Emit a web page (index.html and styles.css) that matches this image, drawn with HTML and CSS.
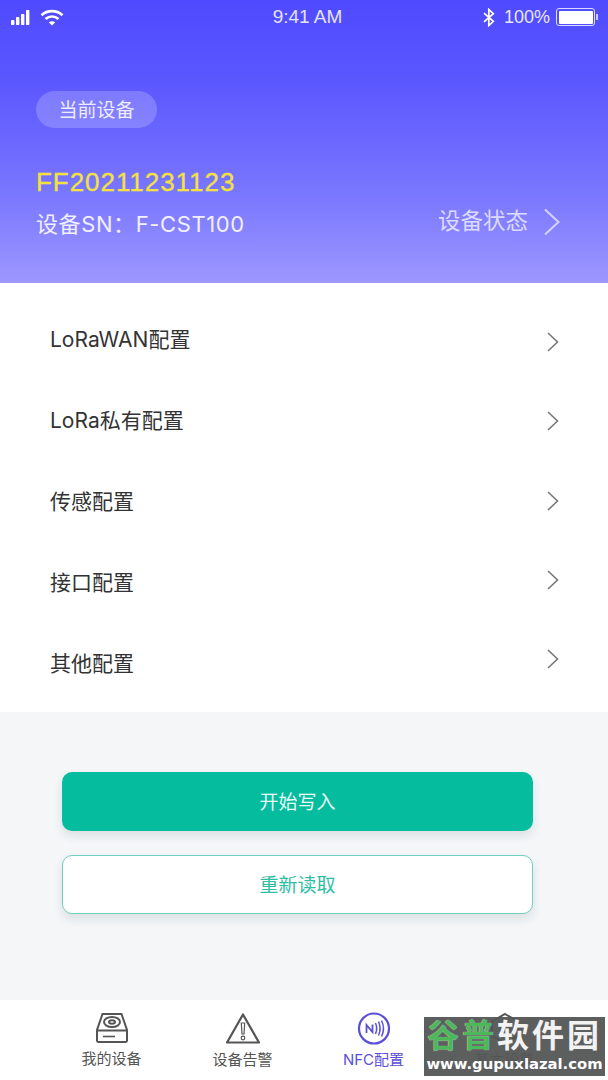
FILE: index.html
```html
<!DOCTYPE html>
<html lang="zh">
<head>
<meta charset="utf-8">
<title>NFC配置</title>
<link rel="stylesheet" href="styles.css">
</head>
<body>
<div class="phone">
  <header class="hero">
    <div class="status">
      <div class="status-left">
        <svg class="signal" width="21" height="15" viewBox="0 0 21 15"><rect x="0" y="10" width="3.4" height="5" rx=".8"/><rect x="5" y="7" width="3.4" height="8" rx=".8"/><rect x="10" y="4" width="3.4" height="11" rx=".8"/><rect x="15" y="0" width="3.4" height="15" rx=".8"/></svg>
        <svg class="wifi" width="24" height="17" viewBox="0 0 24 17" fill="none" stroke="#fff" stroke-width="2.6"><path d="M1.5 6.2C7.5 .8 16.5 .8 22.500 6.2"/><path d="M5.500 10C9.300 6.700 14.700 6.700 18.500 10"/><path d="M12 16.500 8.800 13.200C10.700 11.800 13.300 11.800 15.200 13.200Z" fill="#fff" stroke="none"/></svg>
      </div>
      <div class="status-time">9:41 AM</div>
      <div class="status-right">
        <svg width="12" height="19" viewBox="0 0 12 19" fill="none" stroke="#fff" stroke-width="1.700"><path d="M1 5.200 10.300 13.300 5.800 17.500V1.500L10.300 5.700 1 13.800"/></svg>
        <span class="pct">100%</span>
        <div class="battery"><div class="battery-fill"></div></div>
        <div class="battery-tip"></div>
      </div>
    </div>
    <div class="hero-body">
      <div class="pill">当前设备</div>
      <div class="dev-id">FF20211231123</div>
      <div class="dev-row">
        <div class="dev-sn">设备SN：F-CST100</div>
        <div class="dev-state">
          <span class="dev-state-text">设备状态</span>
          <svg width="18" height="28" viewBox="0 0 18 28" fill="none" stroke="#d3d2ff" stroke-width="2"><path d="M2 1.500 15.500 14 2 26.500"/></svg>
        </div>
      </div>
    </div>
  </header>

  <section class="menu">
    <div class="labels">
      <div class="label">LoRaWAN配置</div>
      <div class="label">LoRa私有配置</div>
      <div class="label">传感配置</div>
      <div class="label">接口配置</div>
      <div class="label">其他配置</div>
    </div>
    <div class="chevrons">
      <svg width="12" height="20" viewBox="0 0 12 20"><path d="M1 1 10.500 10 1 19"/></svg>
      <svg width="12" height="20" viewBox="0 0 12 20"><path d="M1 1 10.500 10 1 19"/></svg>
      <svg width="12" height="20" viewBox="0 0 12 20"><path d="M1 1 10.500 10 1 19"/></svg>
      <svg width="12" height="20" viewBox="0 0 12 20"><path d="M1 1 10.500 10 1 19"/></svg>
      <svg width="12" height="20" viewBox="0 0 12 20"><path d="M1 1 10.500 10 1 19"/></svg>
    </div>
  </section>

  <section class="actions">
    <button class="btn btn-primary">开始写入</button>
    <button class="btn btn-outline">重新读取</button>
  </section>

  <nav class="tabs">
    <div class="tab">
      <svg width="34" height="32" viewBox="0 0 34 32" fill="none" stroke="#555" stroke-width="2"><path d="M7.500 2H26.500L32 18V29A1.500 1.500 0 0 1 30.500 30H3.500A1.500 1.500 0 0 1 2 29V18Z"/><path d="M2 18.500H32"/><ellipse cx="17" cy="10" rx="8" ry="5"/><ellipse cx="17" cy="10" rx="3" ry="1.800"/><path d="M8 24.500H20" stroke-width="1.600"/></svg>
      <span>我的设备</span>
    </div>
    <div class="tab">
      <svg width="36" height="33" viewBox="0 0 36 33" fill="none" stroke="#555" stroke-width="2.200"><path d="M18 2.500 34 30.500H2Z" stroke-linejoin="round"/><path d="M16.300 11H19.700L19 22H17Z" stroke-width="1.200"/><circle cx="18" cy="26" r="1.800" stroke-width="1.200"/></svg>
      <span>设备告警</span>
    </div>
    <div class="tab tab-active">
      <svg width="34" height="33" viewBox="0 0 34 33" fill="none" stroke="#5a50d8"><circle cx="17" cy="16.500" r="15" stroke-width="2.200"/><path d="M9.500 21V13L15.500 20V12.500" stroke-width="1.800"/><path d="M18.500 11C20 14.500 20 18.500 18.500 22M21.500 9.500C23.500 14 23.500 19 21.500 23.500M24.500 8.500C27 13.500 27 19.500 24.500 24.500" stroke-width="1.500"/></svg>
      <span>NFC配置</span>
    </div>
    <div class="tab">
      <svg width="34" height="33" viewBox="0 0 34 33" fill="none" stroke="#555" stroke-width="2"><path d="M17 2 30 9.500V24L17 31 4 24V9.500Z"/><circle cx="17" cy="16.500" r="5"/></svg>
      <span>基本设置</span>
    </div>
  </nav>

  <div class="watermark">
    <div class="wm-top"><span class="wm-green">谷普</span><span class="wm-white">软件园</span></div>
    <div class="wm-url">www.gupuxlazal.com</div>
  </div>
</div>
</body>
</html>
```

FILE: styles.css
```css
* { box-sizing: border-box; }
html, body { margin: 0; padding: 0; }
body { font-family: Inter, "Noto Sans CJK SC", sans-serif; background: #f4f6f8; }
.phone { position: relative; width: 608px; height: 1080px; overflow: hidden; display: flex; flex-direction: column; }

.hero { height: 283px; background: linear-gradient(180deg, #4f4aff 0%, #5c58ff 30%, #7b78ff 70%, #9d98ff 100%); color: #fff; display: flex; flex-direction: column; }
.status { height: 34px; display: grid; grid-template-columns: 1fr auto 1fr; align-items: center; padding: 0 4px 0 11px; }
.status-left { display: flex; align-items: center; gap: 8px; }
.signal { fill: #fff; }
.status-time { font-family: "Liberation Sans", sans-serif; font-size: 19px; color: #e4e3ff; }
.status-right { display: flex; align-items: center; justify-content: flex-end; gap: 0; }
.pct { font-family: "Liberation Sans", sans-serif; font-size: 18px; color: #e8e7ff; margin: 0 6px 0 9px; }
.battery { width: 39px; height: 18px; border: 1.500px solid #d9d8ff; border-radius: 3px; padding: 1.500px; }
.battery-fill { height: 100%; background: #fff; border-radius: 1px; }
.battery-tip { width: 2px; height: 6px; background: #c9c8ff; margin: 0 6px 0 1px; }

.hero-body { padding: 57px 47px 0 36px; display: flex; flex-direction: column; align-items: flex-start; }
.pill { width: 121px; height: 37px; border-radius: 19px; background: rgba(255,255,255,.2); color: #eeedff; font-size: 19px; line-height: 39px; text-align: center; }
.dev-id { margin-top: 37px; font-family: "Liberation Sans", sans-serif; font-size: 26px; line-height: 34px; color: #f4e23c; letter-spacing: .95px; -webkit-text-stroke: .3px #f4e23c; }
.dev-row { margin-top: 8px; width: 100%; display: flex; justify-content: space-between; align-items: center; }
.dev-sn { font-size: 22px; line-height: 34px; color: #f1f0ff; letter-spacing: .6px; }
.dev-state { display: flex; align-items: center; gap: 15px; color: #dbdaff; font-size: 22.500px; line-height: 32px; margin-top: -4px; }
.dev-state-text { margin-top: -2px; }

.menu { height: 429px; background: #fff; display: flex; justify-content: space-between; padding: 16px 49px 0 50px; }
.label { height: 81px; line-height: 81px; font-size: 21px; color: #333; }
.chevrons { display: flex; flex-direction: column; gap: 59.300px; padding-top: 33px; }
.chevrons svg { display: block; fill: none; stroke: #777; stroke-width: 1.600; }

.actions { flex: 1; display: flex; flex-direction: column; gap: 24px; padding: 60px 75px 0 62px; }
.btn { display: block; width: 471px; height: 59px; border-radius: 10px; font: 19px/55px "Noto Sans CJK SC", sans-serif; box-shadow: 0 5px 10px rgba(40,70,70,.12); }
.btn-primary { background: #06bc9f; border: 0; color: #e9fbf7; padding: 0 0 2px; }
.btn-outline { background: #fff; border: 1px solid #6fd0bd; color: #2fbda3; padding: 0 0 4px; }

.tabs { height: 80px; background: #fff; display: grid; grid-template-columns: repeat(4, 131px); padding: 12px 0 0 46px; }
.tab { display: flex; flex-direction: column; align-items: center; gap: 5px; font-size: 15px; line-height: 20px; color: #555; }
.tab svg { display: block; }
.tab-active { color: #5a50d8; }

.watermark { position: absolute; left: 424px; top: 1017px; width: 181px; height: 59px; background: rgba(84,86,86,.95); overflow: hidden; text-align: center; }
.wm-top { font-weight: 700; font-size: 32px; line-height: 38px; letter-spacing: 3px; white-space: nowrap; }
.wm-green { color: #4cb85a; text-shadow: 0 0 1px #dff5e2; }
.wm-white { color: #f2f2f2; }
.wm-url { font-family: "DejaVu Sans", sans-serif; font-weight: 700; font-size: 14.800px; line-height: 18px; color: #fff; white-space: nowrap; }
```
